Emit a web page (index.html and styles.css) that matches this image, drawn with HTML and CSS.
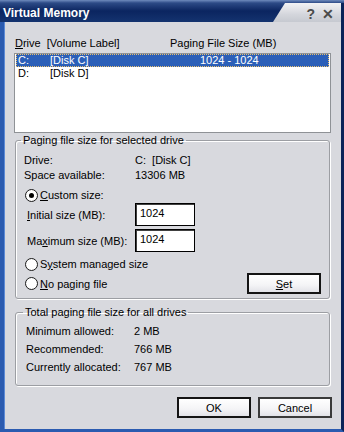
FILE: index.html
```html
<!DOCTYPE html>
<html lang="en">
<head>
    <meta charset="UTF-8">
    <title>Virtual Memory</title>
    <link rel="stylesheet" href="styles.css">
</head>
<body>
    <div class="window">
        <div class="titlebar">
            <span class="title">Virtual Memory</span>
            <div class="tab">
                <span class="tbtn">?</span>
                <span class="tbtn">&#x2715;</span>
            </div>
        </div>
        <div class="client">
            <div class="listhead">
                <span class="col-drive"><u>D</u>rive&nbsp; [Volume Label]</span>
                <span>Paging File Size (MB)</span>
            </div>
            <div class="list">
                <div class="row selected">
                    <span class="c1">C:</span>
                    <span class="c2">[Disk C]</span>
                    <span>1024 - 1024</span>
                </div>
                <div class="row">
                    <span class="c1">D:</span>
                    <span class="c2">[Disk D]</span>
                </div>
            </div>

            <fieldset class="group one">
                <legend>Paging file size for selected drive</legend>
                <div class="info"><span class="lbl">Drive:</span><span>C:&nbsp; [Disk C]</span></div>
                <div class="info"><span class="lbl">Space available:</span><span>13306 MB</span></div>
                <label class="radio first"><span class="dot checked"></span><span><u>C</u>ustom size:</span></label>
                <div class="field"><span class="flbl"><u>I</u>nitial size (MB):</span><span class="box">1024</span></div>
                <div class="field"><span class="flbl">Ma<u>x</u>imum size (MB):</span><span class="box">1024</span></div>
                <label class="radio sys"><span class="dot"></span><span>S<u>y</u>stem managed size</span></label>
                <div class="lastrow">
                    <label class="radio"><span class="dot"></span><span><u>N</u>o paging file</span></label>
                    <button class="btn def"><u>S</u>et</button>
                </div>
            </fieldset>

            <fieldset class="group two">
                <legend>Total paging file size for all drives</legend>
                <div class="total"><span class="tlbl">Minimum allowed:</span><span>2 MB</span></div>
                <div class="total"><span class="tlbl">Recommended:</span><span>766 MB</span></div>
                <div class="total"><span class="tlbl">Currently allocated:</span><span>767 MB</span></div>
            </fieldset>

            <div class="buttons">
                <button class="btn def">OK</button>
                <button class="btn">Cancel</button>
            </div>
        </div>
    </div>
</body>
</html>
```

FILE: styles.css
```css
body {
    margin: 0;
    font-family: "Liberation Sans", Arial, sans-serif;
    font-size: 11px;
    color: #000000;
    background-color: #D8D9DE;
}
.window {
    width: 344px;
    height: 432px;
    display: flex;
    flex-direction: column;
}
.titlebar {
    height: 22px;
    display: flex;
    align-items: stretch;
    background: linear-gradient(#6F8BBD 0, #2C4A86 3px, #0B2560 11px, #14336F 22px);
}
.title {
    flex: 1;
    color: #FFFFFF;
    font-weight: bold;
    font-size: 12px;
    line-height: 22px;
    padding-left: 3px;
    padding-top: 2px;
}
.tab {
    width: 71px;
    margin-top: 3px;
    display: flex;
    align-items: center;
    justify-content: flex-end;
    gap: 7px;
    padding-right: 7px;
    box-sizing: border-box;
    background: linear-gradient(#F2F2F4, #D4D6DC 60%, #C6C9D0);
    clip-path: polygon(12px 0, 100% 0, 100% 100%, 0 100%);
    border-right: 3px solid #0B2358;
}
.tbtn {
    color: #4A4A4A;
    font-weight: bold;
    font-size: 14px;
    line-height: 14px;
    margin-top: 2px;
}
.client {
    flex: 1;
    border-left: 4px solid #2B5BB0;
    border-right: 3px solid #0B2358;
    border-bottom: 3px solid #2B5BB0;
    box-shadow: inset 1px 0 0 #5C8AD6;
    padding: 0 10px;
    background-color: #D8D9DE;
}
.listhead {
    display: flex;
    height: 13px;
    line-height: 13px;
    margin-top: 15px;
    padding-left: 1px;
    margin-bottom: 3px;
}
.col-drive {
    width: 155px;
}
.list {
    height: 78px;
    background-color: #FFFFFF;
    border: 1px solid #8F9296;
}
.row {
    display: flex;
    height: 13px;
    line-height: 13px;
    margin: 0 1px;
    padding-left: 2px;
}
.row.selected {
    background-color: #2B5FB8;
    color: #FFFFFF;
    outline: 1px dotted #E8C070;
    outline-offset: -1px;
}
.c1 {
    width: 32px;
}
.c2 {
    width: 150px;
}
.group {
    margin: 1px 1px 0 1px;
    padding: 0 8px 4px 8px;
    border: 1px solid #9C9EA3;
    border-radius: 3px;
    box-shadow: 1px 1px 0 #FFFFFF, inset 1px 1px 0 #FFFFFF;
}
.group legend {
    padding: 0 2px;
    margin-left: -3px;
    line-height: 13px;
}
.info {
    display: flex;
    height: 15px;
    line-height: 15px;
}
.info:first-of-type {
    margin-top: 6px;
}
.lbl {
    width: 111px;
}
.radio {
    display: flex;
    align-items: center;
    gap: 2px;
    height: 14px;
    line-height: 14px;
    margin-left: 1px;
}
.radio.first {
    margin-top: 5px;
    margin-bottom: 1px;
}
.radio.sys {
    margin-top: 5px;
    margin-bottom: 2px;
}
.dot {
    width: 11px;
    height: 11px;
    border: 1px solid #1C1C1C;
    border-radius: 50%;
    background: radial-gradient(#FFFFFF 60%, #E2E2E2);
    position: relative;
}
.dot.checked::after {
    content: '';
    position: absolute;
    left: 3px;
    top: 3px;
    width: 5px;
    height: 5px;
    border-radius: 50%;
    background-color: #000000;
}
.field {
    display: flex;
    align-items: center;
    height: 23px;
    margin-bottom: 3px;
    padding-left: 3px;
}
.flbl {
    width: 108px;
}
.box {
    width: 60px;
    height: 23px;
    box-sizing: border-box;
    line-height: 19px;
    padding-left: 4px;
    background-color: #FFFFFF;
    border: 1px solid #000000;
    box-shadow: inset 1px 1px 0 #404040;
}
.lastrow {
    display: flex;
    align-items: center;
    justify-content: space-between;
    height: 21px;
}
.btn {
    width: 74px;
    height: 21px;
    padding: 0;
    font-family: inherit;
    font-size: 11px;
    color: #000000;
    background: linear-gradient(#FFFFFF, #F4F4F6 60%, #E2E3E8);
    border: 2px solid #3A3A3A;
    border-radius: 0;
}
.btn.def {
    border-color: #141414;
}
.group.two {
    margin-top: 7px;
    padding: 3px 8px 9px 10px;
}
.total {
    display: flex;
    height: 18px;
    line-height: 18px;
}
.tlbl {
    width: 108px;
}
.buttons {
    display: flex;
    justify-content: flex-end;
    gap: 7px;
    margin-top: 11px;
    margin-right: -1px;
}
```
